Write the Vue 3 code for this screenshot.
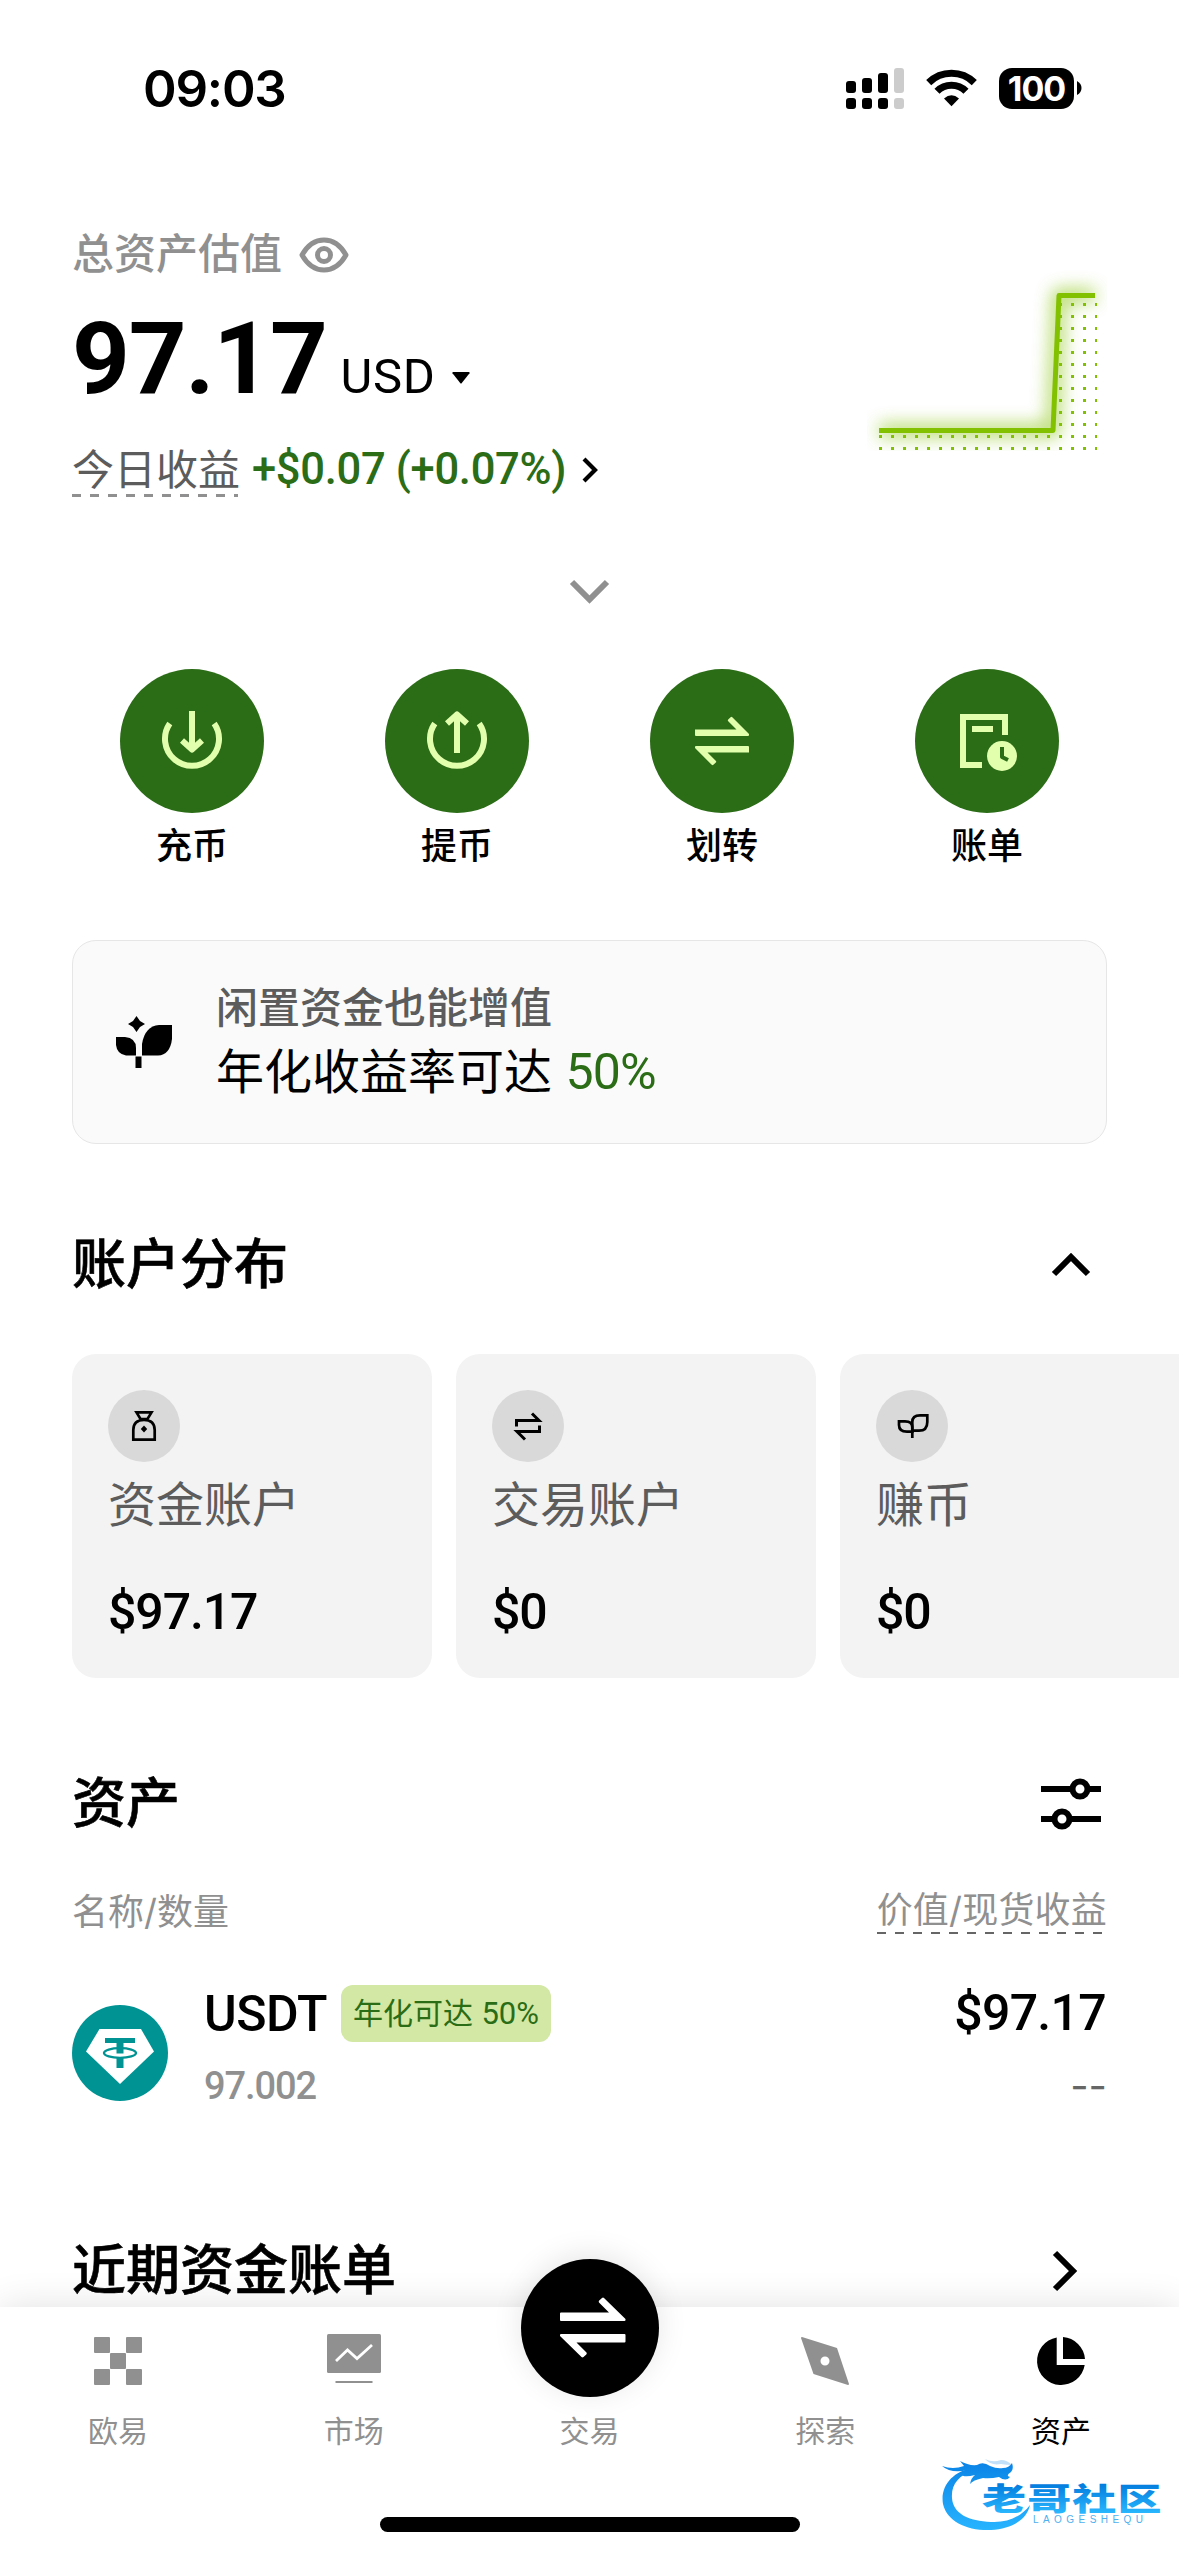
<script setup>
const actions = [
  { id: 'deposit', label: '充币' },
  { id: 'withdraw', label: '提币' },
  { id: 'transfer', label: '划转' },
  { id: 'bills', label: '账单' },
]
const accounts = [
  { id: 'funding', label: '资金账户', value: '$97.17' },
  { id: 'trading', label: '交易账户', value: '$0' },
  { id: 'earn', label: '赚币', value: '$0' },
]
const tabs = [
  { id: 'home', label: '欧易' },
  { id: 'market', label: '市场' },
  { id: 'trade', label: '交易' },
  { id: 'explore', label: '探索' },
  { id: 'assets', label: '资产', active: true },
]
</script>

<template>
  <div class="screen">
    <header class="status">
      <span class="time">09:03</span>
      <div class="status-icons">
        <svg width="58" height="41" viewBox="0 0 58 41">
          <g fill="#000">
            <rect x="0" y="13" width="10" height="12" rx="3" /><rect x="16" y="10" width="10" height="15" rx="3" />
            <rect x="32" y="5" width="10" height="20" rx="3" />
            <rect x="0" y="30" width="10" height="11" rx="3" /><rect x="16" y="30" width="10" height="11" rx="3" />
            <rect x="32" y="30" width="10" height="11" rx="3" />
          </g>
          <g fill="#ccc">
            <rect x="48" y="0" width="10" height="25" rx="3" /><rect x="48" y="30" width="10" height="11" rx="3" />
          </g>
        </svg>
        <svg class="wifi" width="51" height="38" viewBox="0 0 51 38">
          <g fill="none" stroke="#000" stroke-width="7.2">
            <path d="M2.7 13.6A32.500 32.500 0 0 1 48.300 13.600" />
            <path d="M11 22.200A20.600 20.600 0 0 1 40 22.200" />
          </g>
          <path d="M25.500 37.300L18 29.600Q25.500 22.800 33 29.600Z" fill="#000" />
        </svg>
        <div class="battery">100</div>
        <svg width="5" height="14" viewBox="0 0 5 14" class="nub"><path d="M0 0Q4.500 2.500 4.500 7T0 14Z" /></svg>
      </div>
    </header>

    <section class="hero">
      <div class="summary">
        <div class="caption">
          <span>总资产估值</span>
          <svg width="50" height="36" viewBox="0 0 50 36" fill="none" stroke="#909090">
            <path d="M3 18Q11.500 3 25 3T47 18Q38.500 33 25 33T3 18Z" stroke-width="5" stroke-linejoin="round" />
            <circle cx="25" cy="18" r="6.500" stroke-width="5" />
          </svg>
        </div>
        <div class="amount">
          <span class="total num">97.17</span>
          <span class="unit num">USD</span>
          <svg width="18" height="12" viewBox="0 0 18 12"><path d="M1 0H17Q18 .500 17.500 1.300L9.800 11Q9 12 8.200 11L.500 1.300Q0 .500 1 0Z" /></svg>
        </div>
        <div class="today">
          <span class="today-label">今日收益</span>
          <span class="gain num">+$0.07 (+0.07%)</span>
          <svg width="18" height="28" viewBox="0 0 18 28"><path d="M3 3L14 14L3 25" fill="none" stroke="#000" stroke-width="4.200" /></svg>
        </div>
      </div>
      <svg class="chart" width="240" height="192" viewBox="0 0 240 192">
        <defs>
          <pattern id="dots" x="12" y="0" width="12" height="12" patternUnits="userSpaceOnUse">
            <rect width="3" height="3" fill="#82c100" />
          </pattern>
          <filter id="glow" x="-10%" y="-25%" width="120%" height="140%">
            <feGaussianBlur stdDeviation="9" />
          </filter>
        </defs>
        <path d="M12 163.500H186L192 28.500H228" fill="none" stroke="#82c100" stroke-width="11" opacity=".75" filter="url(#glow)" />
        <path d="M12 166H188L192 31H230V184H12Z" fill="url(#dots)" />
        <path d="M12 163.500H186L192 28.500H228" fill="none" stroke="#82c100" stroke-width="5" stroke-linejoin="round" />
      </svg>
    </section>

    <div class="expand">
      <svg width="42" height="26" viewBox="0 0 42 26"><path d="M3 3L20.500 20.500L38 3" fill="none" stroke="#909090" stroke-width="6" /></svg>
    </div>

    <nav class="actions">
      <div v-for="a in actions" :key="a.id" class="action">
        <div class="disc">
          <svg width="72" height="72" viewBox="0 0 72 72" fill="none" stroke="#e2ffae" stroke-width="6" stroke-linejoin="round">
            <g v-if="a.id === 'deposit'">
              <path d="M13.800 18.500A27 27 0 1 0 58.200 18.500" />
              <path d="M36 6V44M26 35.500L36 44.500L46 35.500" />
            </g>
            <g v-else-if="a.id === 'withdraw'">
              <path d="M13.800 18.500A27 27 0 1 0 58.200 18.500" />
              <path d="M36 48V10M26 18.500L36 9.500L46 18.500" />
            </g>
            <g v-else-if="a.id === 'transfer'" fill="#e2ffae" stroke="none">
              <path d="M9 24.500H50.500L42 16Q41.500 15.200 42.200 14.400L44.600 12.200Q45.500 11.500 46.300 12.200L63 29V30Q63 31 62 31H10Q9 31 9 30Z" />
              <path d="M63 47.500H21.500L30 56Q30.500 56.800 29.800 57.600L27.400 59.800Q26.500 60.500 25.700 59.800L9 43V42Q9 41 10 41H62Q63 41 63 42Z" />
            </g>
            <g v-else>
              <path d="M54 30V12H12V60H31" stroke-linejoin="miter" />
              <path d="M21 24H42" />
              <circle cx="51" cy="51" r="15" fill="#e2ffae" stroke="none" />
              <path d="M51 42V52L57 55" stroke="#2b6c17" stroke-width="4" />
            </g>
          </svg>
        </div>
        <span>{{ a.label }}</span>
      </div>
    </nav>

    <section class="banner">
      <svg width="56" height="52" viewBox="0 0 56 52">
        <path d="M20.500 0L24 5L29 8L24 11L20.500 16L17 11L12 8L17 5Z" />
        <path d="M56 9V23Q54 39 42 39.500H26V28Q29 10 43 9Z" />
        <path d="M0 21H9Q20 22 20 32V39.500H10Q1 38 0 29Z" />
        <path d="M19.500 40.500H25.500V52H19.500Z" />
      </svg>
      <div class="banner-copy">
        <span class="lead">闲置资金也能增值</span>
        <span class="offer">年化收益率可达 <em class="num">50%</em></span>
      </div>
    </section>

    <div class="heading dist">
      <h2>账户分布</h2>
      <svg class="up" width="40" height="26" viewBox="0 0 40 26"><path d="M3 22L20 5L37 22" fill="none" stroke="#000" stroke-width="6" /></svg>
    </div>
    <section class="cards">
      <article v-for="c in accounts" :key="c.id" class="card">
        <div class="chip">
          <svg width="36" height="36" viewBox="0 0 36 36" fill="none" stroke="#000" stroke-width="2.700">
            <g v-if="c.id === 'funding'">
              <path d="M10.500 4.400H25.500L21.500 11H14.500Z" />
              <path d="M7.300 31.700V22Q7.300 12 18 12T28.700 22V31.700Z" />
              <path d="M18 17.500L21.200 21L18 24.500L14.800 21Z" fill="#000" stroke="none" />
            </g>
            <g v-else-if="c.id === 'trading'" stroke-width="3">
              <path d="M6.500 18.500V12.500H29L22 5.500" />
              <path d="M29.500 17.500V23.500H7L15 31.500" />
            </g>
            <g v-else>
              <path d="M18.300 21V14Q18.300 7.300 26 7.300H33.300V14Q33.300 22.700 25 22.700H18.300ZM18.300 30V21" />
              <path d="M18.300 23.700H13Q5 23.700 5 17V13.300H11Q18.300 13.300 18.300 19Z" />
            </g>
          </svg>
        </div>
        <span class="card-label">{{ c.label }}</span>
        <span class="card-value num">{{ c.value }}</span>
      </article>
    </section>

    <div class="heading assets">
      <h2>资产</h2>
      <svg class="filter" width="60" height="52" viewBox="0 0 60 52" fill="none" stroke="#000" stroke-width="6">
        <path d="M0 11H30M48 11H60M0 41H12M30 41H60" />
        <circle cx="39" cy="11" r="7.500" /><circle cx="21" cy="41" r="7.500" />
      </svg>
    </div>
    <div class="columns">
      <span>名称/数量</span>
      <span class="dashed">价值/现货收益</span>
    </div>
    <section class="asset">
      <svg class="coin" width="96" height="96" viewBox="0 0 96 96">
        <circle cx="48" cy="48" r="48" fill="#009393" />
        <path d="M27.500 24H69L82 46.500L48 79L14 46.500Z" fill="#fff" />
        <ellipse cx="48" cy="48" rx="16" ry="4.800" fill="none" stroke="#009393" stroke-width="2.300" />
        <path d="M33 33H63V38H51.500V48.500H44.500V38H33ZM44.500 53H51.500V63H44.500Z" fill="#009393" />
      </svg>
      <div class="asset-main">
        <div class="asset-name"><b class="num">USDT</b><span class="badge">年化可达 <em class="num">50%</em></span></div>
        <span class="qty num">97.002</span>
      </div>
      <div class="asset-side">
        <b class="num">$97.17</b>
        <span class="none">--</span>
      </div>
    </section>

    <div class="heading recent">
      <h2>近期资金账单</h2>
      <svg class="go" width="28" height="42" viewBox="0 0 28 42"><path d="M4 3L22 21L4 39" fill="none" stroke="#000" stroke-width="6" /></svg>
    </div>

    <footer class="tabbar">
      <div class="tabs">
        <div v-for="t in tabs" :key="t.id" class="tab" :class="{ active: t.active, trade: t.id === 'trade' }">
          <div v-if="t.id === 'trade'" class="fab">
            <svg width="66" height="62" viewBox="0 0 66 62" fill="#fff">
              <path d="M0 16.500Q0 15.500 1 15.500H49L39 5.500Q38.300 4.600 39.200 3.600L42 .900Q43 0 44 .900L65.500 22V23Q65.500 24 64.500 24H1Q0 24 0 23Z" />
              <path d="M65.500 44.500Q65.500 45.500 64.500 45.500H16.500L26.500 55.500Q27.200 56.400 26.300 57.400L23.500 60.100Q22.500 61 21.500 60.100L0 39V38Q0 37 1 37H64.500Q65.500 37 65.500 38Z" />
            </svg>
          </div>
          <svg v-else width="54" height="54" viewBox="0 0 54 54" fill="#909090">
            <g v-if="t.id === 'home'">
              <rect x="3" y="3" width="16" height="16" rx="1" /><rect x="35" y="3" width="16" height="16" rx="1" />
              <rect x="19" y="19" width="16" height="16" rx="1" />
              <rect x="3" y="35" width="16" height="16" rx="1" /><rect x="35" y="35" width="16" height="16" rx="1" />
            </g>
            <g v-else-if="t.id === 'market'">
              <rect width="54" height="39" rx="1.500" />
              <path d="M9 27L20.500 16L30 24.500L45 11" fill="none" stroke="#fff" stroke-width="2.800" />
              <rect x="8.500" y="47" width="37" height="2" />
            </g>
            <path v-else-if="t.id === 'explore'" fill-rule="evenodd" d="M4 3L39 14L51 50Q51 51 50 51L15.500 40L3 4Q3 3 4 3ZM27 22.500A4.500 4.500 0 1 0 27 31.500A4.500 4.500 0 1 0 27 22.500Z" />
            <g v-else fill="#000">
              <path d="M22.700 3.400V31H50.700A24 24 0 1 1 22.700 3.400Z" />
              <path d="M29 3.100A24 24 0 0 1 51 25H29Z" />
            </g>
          </svg>
          <span>{{ t.label }}</span>
        </div>
      </div>
      <div class="home-bar"></div>
    </footer>

    <svg class="watermark" width="226" height="84" viewBox="0 0 226 84">
      <defs>
        <linearGradient id="wm" x1="0" y1="8" x2="0" y2="78" gradientUnits="userSpaceOnUse">
          <stop offset="0" stop-color="#0a82e6" /><stop offset="1" stop-color="#28b4ff" />
        </linearGradient>
        <linearGradient id="wmt" x1="0" y1="-28" x2="0" y2="3" gradientUnits="userSpaceOnUse">
          <stop offset="0" stop-color="#0078dc" /><stop offset="1" stop-color="#2ab6fe" />
        </linearGradient>
      </defs>
      <g fill="url(#wm)">
        <path d="M34 16C14 19 1 34 4 52C8 70 29 79 52 78C72 77 88 68 91 53C82 65 68 71 52 70C30 69 14 62 13 46C12 33 19 23 36 18Z" />
        <path d="M3 14Q14 18 25 14L21 9Q30 14 38 13Q44 9 51 14Q58 17 64 16Q70 16 73 11Q75 17 72 20Q66 24 71 25Q67 30 60 25Q51 27 44 26Q34 28 31 32Q32 26 36 23Q24 26 22 22Q28 20 29 18Q12 22 3 14Z" />
        <path d="M46 7Q54 11 62 8Q68 8 73 13Q67 13 62 12Q52 14 46 7Z" opacity=".25" />
      </g>
      <g transform="translate(43 58) scale(1.420 1)">
        <text class="wm-title" x="0" y="0" fill="url(#wmt)">老哥社区</text>
      </g>
      <text class="wm-sub" x="94" y="70.500" textLength="110" fill="#4fb0f0">LAOGESHEQU</text>
    </svg>
  </div>
</template>

<style>
body { margin: 0; background: #fff; }
</style>

<style scoped>
.screen {
  position: relative;
  width: 1179px;
  height: 2556px;
  overflow: hidden;
  background: #fff;
  color: #000;
  font-family: Inter, "Noto Sans CJK SC", sans-serif;
}
.num { font-family: Roboto, "Noto Sans", sans-serif; }
svg { display: block; flex: none; }
em { font-style: normal; }

.status {
  display: flex;
  justify-content: space-between;
  align-items: center;
  height: 176px;
  padding: 0 97px 0 143px;
  box-sizing: border-box;
}
.time { font-size: 51px; font-weight: 600; letter-spacing: -1.200px; }
.status-icons { display: flex; align-items: center; }
.wifi { margin: 0 22px; }
.battery {
  width: 75px;
  height: 41px;
  border-radius: 13px;
  background: #000;
  color: #fff;
  font-size: 34px;
  font-weight: 700;
  line-height: 41px;
  text-align: center;
  letter-spacing: -1px;
}
.nub { margin-left: 3px; }

.hero { display: flex; justify-content: space-between; height: 275px; padding: 48px 72px 0; }
.caption { display: flex; align-items: center; height: 62px; gap: 17px; font-size: 42px; color: #909090; font-weight: 500; }
.caption span { line-height: 56px; padding-bottom: 3px; }
.amount { display: flex; align-items: baseline; height: 110px; margin-top: 18px; line-height: 110px; }
.total { font-size: 101px; font-weight: 700; letter-spacing: -1.300px; }
.unit { margin-left: 14px; font-size: 49px; font-weight: 400; letter-spacing: .600px; }
.amount svg { margin-left: 17px; position: relative; top: -9px; }
.today { display: flex; align-items: center; height: 60px; margin-top: 26px; font-size: 42px; line-height: 60px; white-space: nowrap; }
.today-label {
  width: 166px;
  color: #5c5c5c;
  background: repeating-linear-gradient(90deg, #909090 0 9px, transparent 9px 18px) 0 54px / 100% 3px no-repeat;
}
.gain { width: 312px; margin-left: 14px; font-size: 43.500px; color: #2b6c17; font-weight: 500; letter-spacing: -.300px; }
.today svg { margin-left: 17px; }
.chart { margin-top: 43px; }

.expand { display: flex; justify-content: center; height: 26px; margin-top: 80px; }
.actions { display: flex; padding: 0 59.5px; margin-top: 64px; }
.action { flex: 1; display: flex; flex-direction: column; align-items: center; gap: 9px; font-size: 36px; line-height: 48px; font-weight: 500; }
.disc { display: flex; align-items: center; justify-content: center; width: 144px; height: 144px; border-radius: 50%; background: #2b6c17; }

.banner {
  display: flex;
  align-items: center;
  gap: 44px;
  height: 204px;
  margin: 70px 72px 0;
  padding: 0 43px;
  border: 1.5px solid #e6e6e6;
  border-radius: 24px;
  background: #fafafa;
  box-sizing: border-box;
}
.banner-copy { display: flex; flex-direction: column; line-height: 64px; padding-bottom: 4px; }
.lead { font-size: 42px; color: #5c5c5c; font-weight: 500; }
.offer { font-size: 48px; }
.offer em { color: #2b6c17; font-size: 50px; letter-spacing: -.800px; }

.heading { display: flex; align-items: center; justify-content: space-between; height: 60px; padding: 0 72px; }
h2 { margin: 0; font-size: 54px; line-height: 60px; font-weight: 500; -webkit-text-stroke: .600px #000; }
.dist { margin-top: 91px; }
.up { margin-right: 16px; }
.cards { display: flex; gap: 24px; margin-top: 59px; padding-left: 72px; }
.card { flex: none; display: flex; flex-direction: column; width: 360px; height: 324px; padding: 36px; box-sizing: border-box; border-radius: 24px; background: #f3f3f3; line-height: 60px; }
.chip { display: flex; align-items: center; justify-content: center; width: 72px; height: 72px; border-radius: 50%; background: #d9d9d9; }
.card-label { margin-top: 13px; font-size: 48px; color: #5c5c5c; font-weight: 400; }
.card-value { margin-top: 47px; font-size: 50px; font-weight: 500; letter-spacing: -1.100px; }

.assets { margin-top: 96px; }
.filter { margin-right: 6px; }
.columns { display: flex; justify-content: space-between; height: 50px; margin-top: 53px; padding: 0 72px; font-size: 36px; line-height: 50px; color: #909090; }
.dashed { line-height: 46px; letter-spacing: .200px; background: repeating-linear-gradient(90deg, #666 0 9px, transparent 9px 18px) 0 45px / 100% 2px no-repeat; }
.asset { display: flex; align-items: flex-start; margin-top: 48px; padding: 0 72px; height: 126px; }
.coin { margin-top: 20px; }
.asset-main { flex: 1; margin-left: 36px; }
.asset b { font-size: 50px; font-weight: 500; line-height: 56px; letter-spacing: -.500px; }
.asset-side b { margin-right: 1px; letter-spacing: -.700px; }
.asset-name { display: flex; align-items: center; height: 57px; }
.asset-name b { width: 137px; }
.badge { height: 57px; padding: 0 12px; border-radius: 12px; background: #d3e8a4; color: #2b6c17; font-size: 30px; line-height: 57px; }
.badge em { font-size: 31px; }
.qty { display: block; margin-top: 19px; font-size: 38px; line-height: 50px; color: #909090; font-weight: 500; letter-spacing: -1.100px; }
.asset-side { display: flex; flex-direction: column; align-items: flex-end; }
.none { margin-top: 20px; font-size: 40px; line-height: 50px; color: #666; }

.recent { margin-top: 130px; }
.go { margin-right: 28px; }

.tabbar {
  position: absolute;
  left: 0;
  right: 0;
  bottom: 0;
  height: 249px;
  background: #fff;
  box-shadow: 0 0 36px rgba(0, 0, 0, .12);
}
.tabs { display: flex; height: 150px; }
.tab { flex: 1; display: flex; flex-direction: column; align-items: center; padding-top: 27px; gap: 23px; font-size: 30px; line-height: 40px; color: #909090; }
.tab.active { color: #000; }
.tab.trade { padding-top: 0; margin-top: -48px; gap: 14px; }
.fab { display: flex; align-items: center; justify-content: center; width: 138px; height: 138px; margin-left: 1px; border-radius: 50%; background: #000; box-shadow: 0 -4px 30px rgba(0, 0, 0, .1); }
.fab svg { margin-left: 6px; }
.home-bar { width: 420px; height: 15px; margin: 60px auto 0; border-radius: 8px; background: #000; }

.watermark { position: absolute; left: 939px; top: 2452px; }
.wm-title { font-family: "Noto Sans CJK SC", sans-serif; font-size: 31px; font-weight: 900; letter-spacing: .800px; }
.wm-sub { font-family: "Liberation Sans", sans-serif; font-size: 10px; font-weight: 400; }
</style>
